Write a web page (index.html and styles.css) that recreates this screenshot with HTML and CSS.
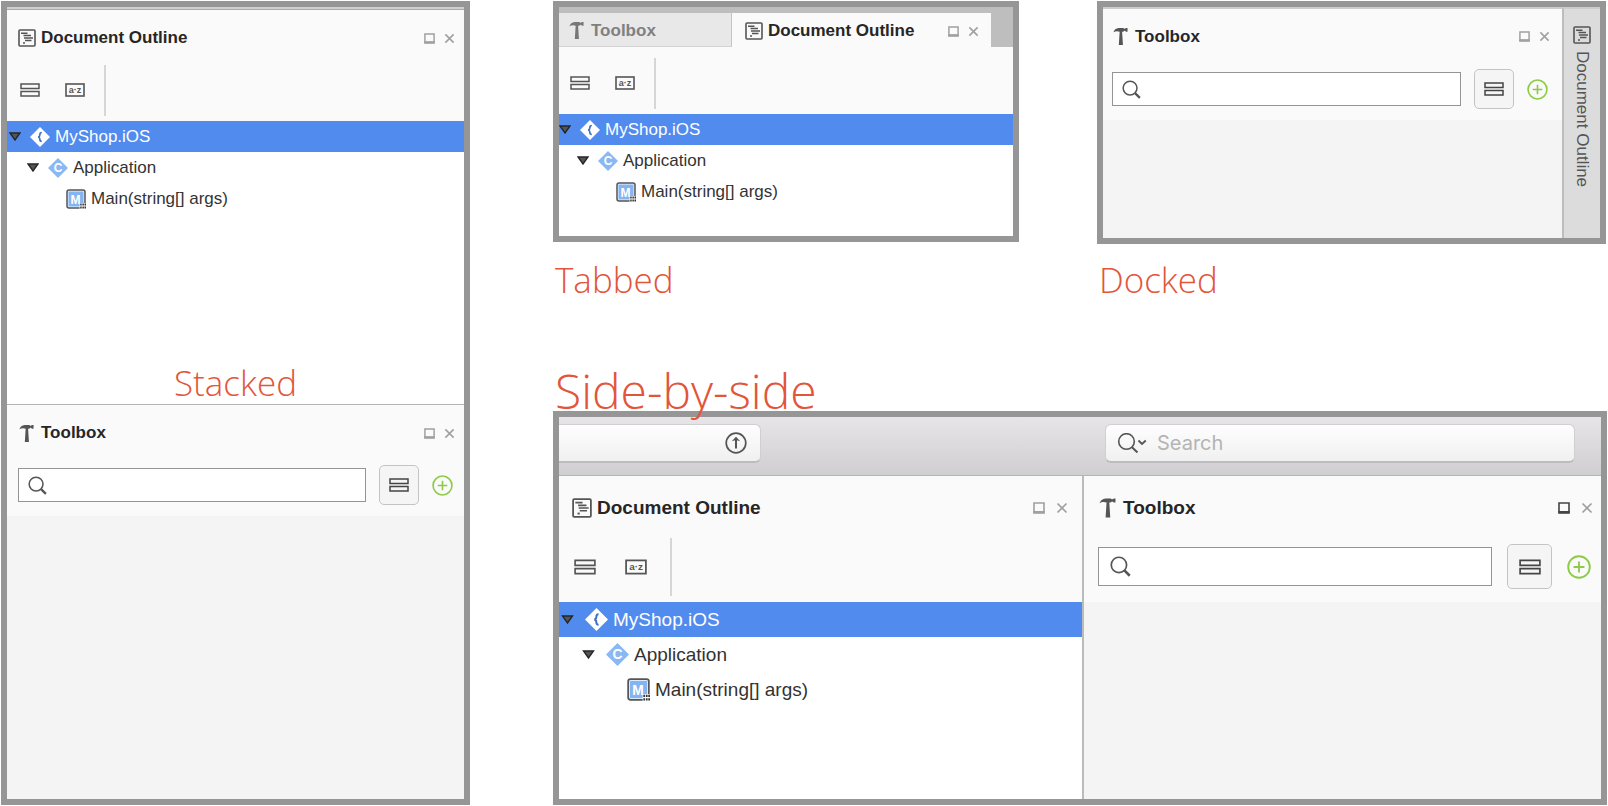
FILE: index.html
```html
<!DOCTYPE html>
<html lang="en">
<head>
<meta charset="utf-8">
<title>Pad layouts</title>
<link rel="stylesheet" href="styles.css">
</head>
<body>
<svg class="sprite" aria-hidden="true">
  <symbol id="i-outline" viewBox="0 0 18 18">
    <rect x="1" y="1" width="16" height="16" rx="1" fill="none" stroke="currentColor" stroke-width="1.6"/>
    <path d="M3 4.200h6.500M5.500 6.600h7.500M6 9h9M7 11.500h6.500" stroke="currentColor" stroke-width="1.500"/>
    <path d="M5 14h2" stroke="currentColor" stroke-width="1.700"/>
  </symbol>
  <symbol id="i-hammer" viewBox="0 0 16 20">
    <path fill="currentColor" d="M.5 5.500C2 1.800 4.500 1 7 1h4l1 .8c.8.200 1.300-.8 2.200-.8H15.500v3.800h-1.300c-.8 0-1.300-1-2.200-.8l-1.200.8H9.700l.9 14.200H6.200l.9-14.200C5 4 2.500 4 .500 5.500z"/>
  </symbol>
  <symbol id="i-stack" viewBox="0 0 20 14">
    <path d="M1 1h18v4.500H1zM1 8.500h18V13H1z" fill="none" stroke="currentColor" stroke-width="1.500"/>
  </symbol>
  <symbol id="i-az" viewBox="0 0 20 14">
    <rect x="1" y="1" width="18" height="12" fill="none" stroke="currentColor" stroke-width="1.600"/>
    <text class="az" x="10" y="10" text-anchor="middle">a·z</text>
  </symbol>
  <symbol id="i-float" viewBox="0 0 12 12">
    <path d="M1 1h10v9H1z" fill="none" stroke="currentColor" stroke-width="1.600"/>
    <path d="M.2 9h11.600v2.800H.2z" fill="currentColor"/>
  </symbol>
  <symbol id="i-close" viewBox="0 0 12 12">
    <path d="M1.500 1.500l9 9M10.500 1.500l-9 9" fill="none" stroke="currentColor" stroke-width="1.700"/>
  </symbol>
  <symbol id="i-search" viewBox="0 0 20 20">
    <circle cx="8.500" cy="8.500" r="7.300" fill="none" stroke="currentColor" stroke-width="1.600"/>
    <path d="M13.500 13.500l5.300 5.300" stroke="currentColor" stroke-width="2.400"/>
  </symbol>
  <symbol id="i-find" viewBox="0 0 30 20">
    <circle cx="9.500" cy="8.500" r="7.800" fill="none" stroke="currentColor" stroke-width="1.600"/>
    <path d="M15 14.200l5.500 5.300" stroke="currentColor" stroke-width="2"/>
    <path d="M21.500 7.500l3.500 3.500 3.800-3.500" fill="none" stroke="currentColor" stroke-width="1.800"/>
  </symbol>
  <symbol id="i-add" viewBox="0 0 22 22">
    <circle cx="11" cy="11" r="9.900" fill="none" stroke="currentColor" stroke-width="1.700"/>
    <path d="M11 6v10M6 11h10" stroke="currentColor" stroke-width="1.700"/>
  </symbol>
  <symbol id="i-up" viewBox="0 0 22 22">
    <circle cx="11" cy="11" r="9.800" fill="none" stroke="currentColor" stroke-width="1.700"/>
    <path d="M11 16.500V6" stroke="currentColor" stroke-width="2"/>
    <path d="M11 4.800l4.200 4.400-4.200-1.200-4.200 1.200z" fill="currentColor"/>
  </symbol>
  <symbol id="i-arrow" viewBox="0 0 12 9">
    <path d="M1 1h10L6 8z" fill="#555" stroke="#262626" stroke-width="1.400"/>
  </symbol>
  <symbol id="i-namespace" viewBox="0 0 20 20">
    <path d="M10 0l10 10-10 10L0 10z" fill="#fff"/>
    <path d="M11.800 5.500c-1.700 0-1.900.7-1.900 1.900 0 1.500 0 2.200-1.700 2.600 1.700.4 1.700 1.100 1.700 2.600 0 1.200.2 1.900 1.900 1.900" fill="none" stroke="#3f70c4" stroke-width="1.700"/>
  </symbol>
  <symbol id="i-class" viewBox="0 0 20 20">
    <path d="M10 0l10 10-10 10L0 10z" fill="#8ab8f3"/>
    <text class="letter" x="10" y="14" text-anchor="middle">C</text>
  </symbol>
  <symbol id="i-method" viewBox="0 0 20 20">
    <rect x="1" y="1" width="18" height="18" rx="2" fill="#dcebff" stroke="#555" stroke-width="1.500"/>
    <path d="M2.600 2.600h14.800v14.800H2.600z" fill="#84b4f2"/>
    <text class="letter" x="9.500" y="14.500" text-anchor="middle">M</text>
    <path d="M13.600 14h6.400V20h-6.400z" fill="#fff"/>
    <path d="M14.200 14.600h1.500v2h-1.500zM16.400 14.600h1.500v2h-1.500zM18.500 14.600h1.500v2h-1.500zM14.200 17.600h1.500v2h-1.500zM16.400 17.600h1.500v2h-1.500zM18.500 17.600h1.500v2h-1.500z" fill="#333"/>
  </symbol>
</svg>

<main class="page">
  <section class="frame stacked" aria-label="Stacked">
    <div class="pane outline">
      <div class="edge"></div>
      <header class="title">
        <svg class="ic-outline"><use href="#i-outline"/></svg>
        <h3>Document Outline</h3>
        <button class="ctl push" aria-label="Float"><svg><use href="#i-float"/></svg></button>
        <button class="ctl" aria-label="Close"><svg><use href="#i-close"/></svg></button>
      </header>
      <div class="tools">
        <button class="tool" aria-label="Group"><svg><use href="#i-stack"/></svg></button>
        <button class="tool" aria-label="Sort"><svg><use href="#i-az"/></svg></button>
        <span class="rule"></span>
      </div>
      <ul class="tree">
        <li class="row selected"><button class="twist" aria-label="Collapse"><svg><use href="#i-arrow"/></svg></button><svg class="node"><use href="#i-namespace"/></svg><span>MyShop.iOS</span></li>
        <li class="row level-2"><button class="twist" aria-label="Collapse"><svg><use href="#i-arrow"/></svg></button><svg class="node"><use href="#i-class"/></svg><span>Application</span></li>
        <li class="row level-3"><svg class="node"><use href="#i-method"/></svg><span>Main(string[] args)</span></li>
      </ul>
      <h2 class="label">Stacked</h2>
    </div>
    <div class="pane toolbox">
      <header class="title">
        <svg class="ic-hammer"><use href="#i-hammer"/></svg>
        <h3>Toolbox</h3>
        <button class="ctl push" aria-label="Float"><svg><use href="#i-float"/></svg></button>
        <button class="ctl" aria-label="Close"><svg><use href="#i-close"/></svg></button>
      </header>
      <div class="finder">
        <label class="search"><svg><use href="#i-search"/></svg><input type="text" aria-label="Search toolbox"></label>
        <button class="group" aria-label="Group"><svg><use href="#i-stack"/></svg></button>
        <button class="add" aria-label="Add"><svg><use href="#i-add"/></svg></button>
      </div>
      <div class="empty"></div>
    </div>
  </section>

  <div class="right">
    <div class="pair">
      <section class="example" aria-label="Tabbed">
        <div class="frame tabbed">
          <div class="tabs">
            <button class="tab"><svg class="ic-hammer"><use href="#i-hammer"/></svg>Toolbox</button>
            <div class="tab active">
              <svg class="ic-outline"><use href="#i-outline"/></svg>
              <h3>Document Outline</h3>
              <button class="ctl push" aria-label="Float"><svg><use href="#i-float"/></svg></button>
              <button class="ctl" aria-label="Close"><svg><use href="#i-close"/></svg></button>
            </div>
          </div>
          <div class="pane outline">
            <div class="tools">
              <button class="tool" aria-label="Group"><svg><use href="#i-stack"/></svg></button>
              <button class="tool" aria-label="Sort"><svg><use href="#i-az"/></svg></button>
              <span class="rule"></span>
            </div>
            <ul class="tree">
              <li class="row selected"><button class="twist" aria-label="Collapse"><svg><use href="#i-arrow"/></svg></button><svg class="node"><use href="#i-namespace"/></svg><span>MyShop.iOS</span></li>
              <li class="row level-2"><button class="twist" aria-label="Collapse"><svg><use href="#i-arrow"/></svg></button><svg class="node"><use href="#i-class"/></svg><span>Application</span></li>
              <li class="row level-3"><svg class="node"><use href="#i-method"/></svg><span>Main(string[] args)</span></li>
            </ul>
          </div>
        </div>
        <h2 class="label">Tabbed</h2>
      </section>

      <section class="example" aria-label="Docked">
        <div class="frame docked">
          <div class="pane toolbox">
            <header class="title">
              <svg class="ic-hammer"><use href="#i-hammer"/></svg>
              <h3>Toolbox</h3>
              <button class="ctl push" aria-label="Float"><svg><use href="#i-float"/></svg></button>
              <button class="ctl" aria-label="Close"><svg><use href="#i-close"/></svg></button>
            </header>
            <div class="finder">
              <label class="search"><svg><use href="#i-search"/></svg><input type="text" aria-label="Search toolbox"></label>
              <button class="group" aria-label="Group"><svg><use href="#i-stack"/></svg></button>
              <button class="add" aria-label="Add"><svg><use href="#i-add"/></svg></button>
            </div>
            <div class="empty"></div>
          </div>
          <div class="dock">
            <button class="dock-tab"><svg class="ic-outline"><use href="#i-outline"/></svg>Document Outline</button>
          </div>
        </div>
        <h2 class="label">Docked</h2>
      </section>
    </div>

    <h2 class="label big">Side-by-side</h2>
    <section class="frame side" aria-label="Side-by-side">
      <div class="toolbar">
        <div class="status"><button aria-label="Updates"><svg><use href="#i-up"/></svg></button></div>
        <label class="global"><svg><use href="#i-find"/></svg><input type="text" placeholder="Search" aria-label="Search"></label>
      </div>
      <div class="columns">
        <div class="pane outline">
          <header class="title">
            <svg class="ic-outline"><use href="#i-outline"/></svg>
            <h3>Document Outline</h3>
            <button class="ctl push" aria-label="Float"><svg><use href="#i-float"/></svg></button>
            <button class="ctl" aria-label="Close"><svg><use href="#i-close"/></svg></button>
          </header>
          <div class="tools">
            <button class="tool" aria-label="Group"><svg><use href="#i-stack"/></svg></button>
            <button class="tool" aria-label="Sort"><svg><use href="#i-az"/></svg></button>
            <span class="rule"></span>
          </div>
          <ul class="tree">
            <li class="row selected"><button class="twist" aria-label="Collapse"><svg><use href="#i-arrow"/></svg></button><svg class="node"><use href="#i-namespace"/></svg><span>MyShop.iOS</span></li>
            <li class="row level-2"><button class="twist" aria-label="Collapse"><svg><use href="#i-arrow"/></svg></button><svg class="node"><use href="#i-class"/></svg><span>Application</span></li>
            <li class="row level-3"><svg class="node"><use href="#i-method"/></svg><span>Main(string[] args)</span></li>
          </ul>
        </div>
        <div class="pane toolbox">
          <header class="title">
            <svg class="ic-hammer"><use href="#i-hammer"/></svg>
            <h3>Toolbox</h3>
            <button class="ctl push dark" aria-label="Float"><svg><use href="#i-float"/></svg></button>
            <button class="ctl" aria-label="Close"><svg><use href="#i-close"/></svg></button>
          </header>
          <div class="finder">
            <label class="search"><svg><use href="#i-search"/></svg><input type="text" aria-label="Search toolbox"></label>
            <button class="group" aria-label="Group"><svg><use href="#i-stack"/></svg></button>
            <button class="add" aria-label="Add"><svg><use href="#i-add"/></svg></button>
          </div>
          <div class="empty"></div>
        </div>
      </div>
    </section>
  </div>
</main>
</body>
</html>
```

FILE: styles.css
```css
* { box-sizing: border-box; }

body {
  margin: 0;
  background: #fff;
  color: #333;
  font-family: "Liberation Sans", Arial, sans-serif;
}

h2, h3, ul { margin: 0; padding: 0; font: inherit; }
ul { list-style: none; }
svg { display: block; flex: none; color: #555; }
button {
  display: flex;
  align-items: center;
  flex: none;
  margin: 0;
  padding: 0;
  border: 0;
  background: none;
  color: inherit;
  font: inherit;
}
input {
  flex: 1;
  min-width: 0;
  height: 100%;
  padding: 0;
  border: 0;
  outline: 0;
  background: none;
  color: inherit;
  font: inherit;
}
.sprite { display: none; }
.az { font: bold 9px "Liberation Sans", Arial, sans-serif; fill: #555; }
.letter { font: bold 12px "Liberation Sans", Arial, sans-serif; fill: #fff; }

.page {
  display: grid;
  grid-template-columns: 469fr 1054fr;
  column-gap: 83px;
  min-height: 100vh;
  padding: 1px;
}

/* Measurements shared by every pane; .side enlarges them. */
.frame {
  --text: 17px;
  --inset: 10px;
  --end: 12px;
  --head: 44px;
  --bar: 67px;
  --row: 31px;
  --node: 20px;
  --outline: 18px;
  --hammer: 15px;
  --hammer-h: 19px;
  --tool: 20px;
  --tool-gap: 25px;
  --tool-h: 14px;
  --rule: 51px;
  --ctl: 11px;
  --ctl-gap: 9px;
  --twist: 12px;
  --twist-gap: 9px;
  --indent: 18px;
  --field: 34px;
  --group: 40px;
  --add: 21px;
  --gap: 13px;
  --glass: 19px;
  --pad: 9px;
  display: flex;
  flex-direction: column;
  border: 6px solid #969696;
  font-size: var(--text);
  line-height: 20px;
}
.stacked { --inset: 11px; --end: 9px; }
.side {
  --text: 19px;
  --inset: 13px;
  --end: 14px;
  --head: 50px;
  --bar: 76px;
  --row: 35px;
  --node: 23px;
  --outline: 20px;
  --hammer: 17px;
  --hammer-h: 22px;
  --tool: 22px;
  --tool-gap: 29px;
  --tool-h: 16px;
  --rule: 58px;
  --ctl: 12px;
  --ctl-gap: 11px;
  --twist: 13px;
  --twist-gap: 11px;
  --indent: 21px;
  --field: 39px;
  --group: 45px;
  --add: 24px;
  --gap: 15px;
  --glass: 21px;
  --pad: 11px;
}

.pane { display: flex; flex-direction: column; min-width: 0; }
.edge { height: 3px; background: #d0d0d0; border-bottom: 1px solid #aaa; }

.title {
  display: flex;
  align-items: center;
  gap: 5px;
  height: var(--head);
  padding: 12px var(--end) 0 var(--inset);
  background: #fafafa;
}
h3 { font-weight: bold; color: #262626; white-space: nowrap; }
.ic-outline { width: var(--outline); height: var(--outline); }
.ic-hammer { width: var(--hammer); height: var(--hammer-h); margin: 0 2px 0 1px; }
.ctl svg { width: var(--ctl); height: var(--ctl); color: #a0a0a0; }
.ctl.dark svg { color: #444; }
.push { margin-left: auto; margin-right: calc(var(--ctl-gap) - 5px); }

.tools {
  display: flex;
  align-items: center;
  gap: var(--tool-gap);
  height: var(--bar);
  padding: 5px 0 0 calc(var(--inset) + 2px);
  background: #fafafa;
}
.tool svg { width: var(--tool); height: var(--tool-h); }
.rule { width: 2px; height: var(--rule); margin-left: -6px; background: #d6d6d6; }

.row {
  display: flex;
  align-items: center;
  height: var(--row);
  padding-left: calc(var(--inset) - 10px);
  white-space: nowrap;
}
.selected { background: #528bee; color: #fff; }
.level-2 { padding-left: calc(var(--inset) - 10px + var(--indent)); }
.level-3 { padding-left: calc(var(--inset) - 10px + var(--indent) * 2 + var(--twist) + var(--twist-gap)); }
.twist { margin-right: var(--twist-gap); }
.twist svg { width: var(--twist); height: 9px; }
.node { width: var(--node); height: var(--node); margin-right: 5px; }

.finder {
  display: flex;
  align-items: center;
  gap: var(--gap);
  height: var(--bar);
  padding: 5px calc(var(--end) + 2px) 0 var(--inset);
  background: #fafafa;
}
.search {
  display: flex;
  align-items: center;
  gap: 8px;
  flex: 1;
  min-width: 0;
  height: var(--field);
  padding: 0 var(--pad);
  border: 1px solid #949494;
  background: #fff;
}
.search svg { width: var(--glass); height: var(--glass); }
.group {
  justify-content: center;
  width: var(--group);
  height: var(--group);
  border: 1px solid #c4c4c4;
  border-radius: 5px;
  background: #f5f5f5;
}
.group svg { width: var(--tool); height: var(--tool-h); color: #444; }
.add svg { width: var(--add); height: var(--add); color: #8ccb46; }
.empty { flex: 1; background: #f4f4f4; }

.label {
  color: #e2553b;
  font-family: "Open Sans", "Noto Sans", sans-serif;
  font-weight: 300;
  font-size: 35px;
  line-height: 40px;
}

.stacked { --inset: 11px; display: grid; grid-template-rows: 397fr 395fr; }
.stacked .row { --inset: 12px; }
.stacked .toolbox { border-top: 1px solid #b4b4b4; }
.stacked .label { margin: auto auto 1px; }

.right { display: flex; flex-direction: column; min-width: 0; }
.pair {
  display: grid;
  grid-template-columns: 466fr 509fr;
  column-gap: 78px;
  padding-right: 1px;
}
.example { display: flex; flex-direction: column; justify-content: space-between; }
.example .label { padding: 16px 2px 20px; }

.tabbed { height: 241px; }
.tabs {
  display: grid;
  grid-template-columns: 173fr 259fr 22fr;
  padding-top: 6px;
  background: #bebebe;
}
.tab {
  display: flex;
  align-items: center;
  gap: 5px;
  height: 34px;
  padding: 2px 9px 0;
  border-right: 1px solid #c4c4c4;
  border-bottom: 1px solid #d2d2d2;
  background: #e8e8e8;
  color: #808080;
  font-weight: bold;
}
.tab .ic-hammer { color: #777; }
.tab.active { border: 0; background: #fafafa; padding: 2px 12px 0 13px; }
.tabbed .pane { --inset: 9px; }
.tabbed .row { --inset: 10px; }

.docked { flex-direction: row; height: 243px; }
.docked .pane { --inset: 9px; flex: 1; border-top: 2px solid #ccc; }
.docked .title { padding-top: 11px; }
.dock {
  width: 38px;
  border-top: 2px solid #ccc;
  border-left: 2px solid #bdbdbd;
  background: #dcdcdc;
}
.dock-tab {
  gap: 7px;
  width: 100%;
  padding-top: 17px;
  color: #555;
  writing-mode: vertical-rl;
}

.big {
  position: relative;
  z-index: 1;
  margin: 41px 2px -10px;
  font-size: 48px;
  line-height: 60px;
}
.side { flex: 1; }
.toolbar {
  display: flex;
  justify-content: space-between;
  padding: 7px 26px 12px 0;
  border-bottom: 1px solid #b4b4b4;
  background: linear-gradient(#e7e5e8, #d0ced1);
}
.status, .global {
  display: flex;
  align-items: center;
  height: 39px;
  border: 1px solid #d0ced0;
  border-bottom: 2px solid #bdbbbd;
  border-radius: 6px;
  background: linear-gradient(#fefefe, #f0f0f0);
}
.status {
  justify-content: flex-end;
  flex: 0 1 202px;
  padding-right: 13px;
  border-left: 0;
  border-radius: 0 6px 6px 0;
}
.status svg { width: 22px; height: 22px; }
.global {
  gap: 10px;
  flex: 0 1 470px;
  padding: 0 11px;
  font-family: Inter, Roboto, sans-serif;
  font-size: 20px;
}
.global svg { width: 30px; height: 20px; }
.global input::placeholder { color: #b4b4b4; opacity: 1; }

.columns { display: grid; grid-template-columns: 523fr 519fr; flex: 1; }
.side .title { padding-top: 14px; }
.side .toolbox { --inset: 14px; --end: 8px; border-left: 2px solid #bbb; }
.side .row { --inset: 12px; }
```
